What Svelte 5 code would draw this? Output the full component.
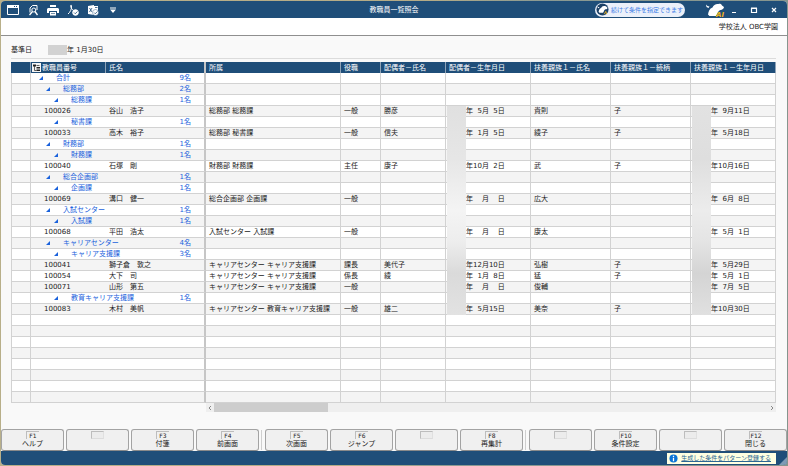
<script lang="ts">
  interface GroupRow {
    kind: 'group';
    level: number;
    label: string;
    count: number;
  }

  interface MemberRow {
    kind: 'member';
    id: string;
    name: string;
    dept: string;
    post: string;
    spouse: string;
    spouseBirth: string;
    dependent: string;
    relation: string;
    dependentBirth: string;
  }

  type Row = GroupRow | MemberRow;

  const FIG = '\u2007';

  // blank parts keep the width of two digits
  function date(month?: number, day?: number): string {
    const m = String(month ?? '').padStart(2, FIG);
    const d = String(day ?? '').padStart(2, FIG);
    return `年${m}月${d}日`;
  }

  function group(level: number, label: string, count: number): GroupRow {
    return { kind: 'group', level, label, count };
  }

  function member(
    id: string,
    name: string,
    dept: string,
    post: string,
    spouse: string,
    spouseBirth: string,
    dependent: string,
    relation: string,
    dependentBirth: string
  ): MemberRow {
    return { kind: 'member', id, name, dept, post, spouse, spouseBirth, dependent, relation, dependentBirth };
  }

  const rows: Row[] = [
    group(0, '合計', 9),
    group(1, '総務部', 2),
    group(2, '総務課', 1),
    member('100026', '谷山　浩子', '総務部 総務課', '一般', '勝彦', date(5, 5), '貴則', '子', date(9, 11)),
    group(2, '秘書課', 1),
    member('100033', '高木　裕子', '総務部 秘書課', '一般', '信夫', date(1, 5), '綾子', '子', date(5, 18)),
    group(1, '財務部', 1),
    group(2, '財務課', 1),
    member('100040', '石塚　剛', '財務部 財務課', '主任', '康子', date(10, 2), '武', '子', date(10, 16)),
    group(1, '総合企画部', 1),
    group(2, '企画課', 1),
    member('100069', '溝口　健一', '総合企画部 企画課', '一般', '', date(), '広大', '', date(6, 8)),
    group(1, '入試センター', 1),
    group(2, '入試課', 1),
    member('100068', '平田　浩太', '入試センター 入試課', '一般', '', date(), '康太', '', date(5, 1)),
    group(1, 'キャリアセンター', 4),
    group(2, 'キャリア支援課', 3),
    member('100041', '獅子倉　敦之', 'キャリアセンター キャリア支援課', '課長', '美代子', date(12, 10), '弘樹', '子', date(5, 29)),
    member('100054', '大下　司', 'キャリアセンター キャリア支援課', '係長', '綾', date(1, 8), '猛', '子', date(5, 1)),
    member('100071', '山形　第五', 'キャリアセンター キャリア支援課', '一般', '', date(), '俊輔', '', date(7, 5)),
    group(2, '教育キャリア支援課', 1),
    member('100083', '木村　美帆', 'キャリアセンター 教育キャリア支援課', '一般', '雄二', date(5, 15), '美奈', '子', date(10, 30))
  ];

  const firstMember = rows.findIndex((r) => r.kind === 'member');
  const blankRows = Array.from({ length: 8 });
  const trailing = Array.from({ length: 7 });

  const keyGroups = [
    [
      { key: 'F1', label: 'ヘルプ' },
      { key: '', label: '' },
      { key: 'F3', label: '付箋' },
      { key: 'F4', label: '前画面' }
    ],
    [
      { key: 'F5', label: '次画面' },
      { key: 'F6', label: 'ジャンプ' },
      { key: '', label: '' },
      { key: 'F8', label: '再集計' }
    ],
    [
      { key: '', label: '' },
      { key: 'F10', label: '条件設定' },
      { key: '', label: '' },
      { key: 'F12', label: '閉じる' }
    ]
  ];
</script>

{#snippet dog()}
  <path d="M1 2.500 2.500 4 4.500 4.500 3.500 6 1.500 5Z" />
  <path
    d="M3 12.500C3.500 9.500 4.500 6.500 7.500 5.500 8.500 3 11 1.500 13.500 2c1.500-.5 3 .2 3.500 1.500l2 1.500c-.3 1.800-1.500 2.800-3.500 3-1.500.5-2.500 1.500-3 3.500l-1.500 2.500H4.500Z"
  />
{/snippet}

<div class="desktop">
  <div class="window">
    <header class="titlebar">
      <div class="tools">
        <button type="button" aria-label="ウィンドウ">
          <svg viewBox="0 0 12 10" fill="none" stroke="currentColor">
            <path d="M.5.5h11v9H.5z" />
            <path d="M0 1.500h12" stroke-width="3" />
            <path d="M7 1.500h1M9 1.500h1" stroke="#1f4e79" />
          </svg>
        </button>
        <button type="button" aria-label="印刷プレビュー">
          <svg viewBox="0 0 12 12" fill="none" stroke="currentColor">
            <path d="M3 8.500V4l2.500-2.500H10V6" />
            <circle cx="6.800" cy="6" r="2" />
            <path d="M5.500 7.500 2.500 11M8 7.500 10.500 11" stroke-width="1.300" />
          </svg>
        </button>
        <button type="button" aria-label="印刷">
          <svg viewBox="0 0 12 12" fill="currentColor">
            <path d="M3 1h6v2H3zM1 4h10l1 1v4H10V7H2v2H0V5zM3 8h6v3.500H3z" />
            <path d="M4 9.500h4" stroke="#1f4e79" stroke-width=".6" />
          </svg>
        </button>
        <button type="button" aria-label="PDF出力">
          <svg viewBox="0 0 12 12" fill="none" stroke="currentColor">
            <path d="M1 10C3 8.500 5 5 4.500 1.500 4 .5 3 1.500 4 3.500 5 5.500 6 6.500 8 7" />
            <circle cx="8.500" cy="8.500" r="2.800" fill="currentColor" />
            <path d="m7 8.500 1.200 1.200L10.500 7.500" stroke="#1f4e79" stroke-width=".8" />
          </svg>
        </button>
        <button type="button" aria-label="Excel出力">
          <svg viewBox="0 0 12 12" fill="currentColor">
            <path d="M1 2l6-1v10L1 10zM7 2h4v5H7z" />
            <path d="M2.500 4l2.500 4M5 4 2.500 8M8 3.500h2.500" stroke="#1f4e79" stroke-width=".8" />
            <circle cx="8.500" cy="8.500" r="3" stroke="#1f4e79" stroke-width=".4" />
            <path d="m7 8.500 1.200 1.200L10.500 7.500" fill="none" stroke="#1f4e79" stroke-width=".8" />
          </svg>
        </button>
        <button type="button" aria-label="その他">
          <svg viewBox="0 0 12 12" fill="currentColor">
            <path d="M3 3.500h6v1H3zM3 5.500h6L6 9z" />
          </svg>
        </button>
      </div>

      <h1>教職員一覧照会</h1>

      <div class="right">
        <button type="button" class="hint">
          <svg viewBox="0 0 14 14">
            <circle cx="7" cy="7" r="6.500" fill="#1c4167" />
            <g fill="#fff" transform="translate(1 2) scale(.6)">{@render dog()}</g>
            <path d="M9 12l1.500-3 1 3" fill="none" stroke="#e8b023" />
          </svg>
          続けて条件を指定できます
        </button>
        <button type="button" class="ai" aria-label="AIアシスタント">
          <svg viewBox="0 0 20 15">
            <g fill="#fff">{@render dog()}</g>
            <text x="11" y="14.500">AI</text>
          </svg>
        </button>
        <div class="controls">
          <button type="button" aria-label="最小化">
            <svg viewBox="0 0 8 8"><path d="M2 6.500h4" /></svg>
          </button>
          <button type="button" aria-label="最大化">
            <svg viewBox="0 0 8 8"><path d="M1.500 2.500h5v4h-5zM1 2h6" /></svg>
          </button>
          <button type="button" aria-label="ウィンドウを閉じる">
            <svg viewBox="0 0 8 8"><path d="m2 2 4 4M6 2 2 6" /></svg>
          </button>
        </div>
      </div>
    </header>

    <div class="company">学校法人 OBC学園</div>

    <main>
      <div class="criteria">
        <span>基準日</span>
        <span class="base-date"><i></i>年 1月30日</span>
      </div>

      <table>
        <colgroup>
          <col class="w-mark" />
          <col class="w-id" />
          <col class="w-name" />
          <col />
          <col class="w-post" />
          <col class="w-spouse" />
          <col class="w-date" />
          <col class="w-dep" />
          <col class="w-dep" />
          <col class="w-date" />
        </colgroup>
        <thead>
          <tr>
            <th aria-label="付箋"></th>
            <th class="id-head">
              <div>
                <button type="button" aria-label="階層表示">
                  <svg viewBox="0 0 9 9">
                    <path d="M0 0h9v9H0z" fill="#f4f4f4" />
                    <path d="M1 1.500h3v2H1zM4.500 4H8v1.500H4.500zM4.500 6.500H8V8H4.500z" fill="#222" />
                    <path d="M2.500 3v4.500h2M4.500 2.500h3" fill="none" stroke="#222" stroke-width=".7" />
                  </svg>
                </button>
                教職員番号
              </div>
            </th>
            <th class="name-head">氏名</th>
            <th>所属</th>
            <th>役職</th>
            <th>配偶者－氏名</th>
            <th>配偶者－生年月日</th>
            <th>扶養親族１－氏名</th>
            <th>扶養親族１－続柄</th>
            <th>扶養親族１－生年月日</th>
          </tr>
        </thead>
        <tbody>
          {#each rows as row, i}
            <tr>
              <td></td>
              {#if row.kind === 'group'}
                <td colspan="2" class="group">
                  <div class="tree level-{row.level}">
                    <button type="button" aria-label="{row.label}を折りたたむ"></button>
                    <span>{row.label}</span>
                    <span class="count">{row.count}名</span>
                  </div>
                </td>
                {#each trailing as _}
                  <td></td>
                {/each}
              {:else}
                <td class="id">{row.id}</td>
                <td class="name">{row.name}</td>
                <td>{row.dept}</td>
                <td>{row.post}</td>
                <td>{row.spouse}</td>
                <td class="date">
                  {#if i === firstMember}<div class="mask"></div>{/if}
                  {row.spouseBirth}
                </td>
                <td>{row.dependent}</td>
                <td>{row.relation}</td>
                <td class="date">
                  {#if i === firstMember}<div class="mask mask--dark"></div>{/if}
                  {row.dependentBirth}
                </td>
              {/if}
            </tr>
          {/each}
          {#each blankRows as _}
            <tr>
              <td></td>
              <td colspan="2" class="group"></td>
              {#each trailing as _}
                <td></td>
              {/each}
            </tr>
          {/each}
        </tbody>
      </table>

      <div class="scroll">
        <button type="button" aria-label="左へスクロール">
          <svg viewBox="0 0 8 8"><path d="M5 2 3 4l2 2" /></svg>
        </button>
        <div class="thumb"></div>
        <button type="button" aria-label="右へスクロール">
          <svg viewBox="0 0 8 8"><path d="m3 2 2 2-2 2" /></svg>
        </button>
      </div>
    </main>

    <nav class="keys">
      {#each keyGroups as keys}
        <div class="key-group">
          {#each keys as k}
            <button type="button" disabled={!k.key} aria-label={k.label || '未割り当て'}>
              <kbd class:empty={!k.key}>{k.key}</kbd>
              <span>{k.label}</span>
            </button>
          {/each}
        </div>
      {/each}
    </nav>

    <footer>
      <div class="notice">
        <svg viewBox="0 0 10 10">
          <circle cx="5" cy="5" r="4.500" fill="#0a74d6" />
          <path d="M5 2v1.300M5 4.200V8" stroke="#fff" stroke-width="1.400" />
        </svg>
        <a href="#pattern">生成した条件をパターン登録する</a>
      </div>
      <svg class="grip" viewBox="0 0 8 8"><path d="M8 0v8H0z" /></svg>
    </footer>
  </div>
</div>

<style>
  :global(body) {
    margin: 0;
  }

  .desktop {
    --navy: #1f4e79;
    --line: #d2d2d2;
    box-sizing: border-box;
    display: flex;
    min-height: 100vh;
    padding: 1px;
    background: linear-gradient(100deg, #b9b08a 0%, #b4ab86 50%, #8b9a92 62%, #85948d 100%);
    font-family: 'DejaVu Sans', 'Noto Sans CJK JP', sans-serif;
    font-size: 7px;
    line-height: 10px;
    color: #222;
  }

  .window {
    display: flex;
    flex: 1;
    flex-direction: column;
    min-width: 0;
    overflow: hidden;
    border-radius: 4px;
    background: #f9f9f9;
  }

  button {
    padding: 0;
    border: none;
    background: transparent;
    color: inherit;
    font: inherit;
  }

  svg {
    display: block;
  }

  .titlebar {
    display: grid;
    grid-template-columns: 1fr auto 1fr;
    align-items: center;
    height: 17px;
    background: var(--navy);
    color: #fff;
  }

  h1 {
    margin: 0;
    font-size: 7px;
    font-weight: 400;
  }

  .tools {
    display: flex;
    align-items: center;
    gap: 8px;
    padding-left: 6px;
  }

  .tools svg {
    width: 12px;
    height: 12px;
  }

  .right {
    display: flex;
    align-items: center;
    justify-content: flex-end;
    padding-right: 9px;
  }

  .hint {
    display: flex;
    align-items: center;
    gap: 2px;
    box-sizing: border-box;
    height: 14px;
    padding: 0 2px 0 1px;
    border-radius: 7px;
    background: #ebf0fa;
    color: #3b7be6;
    font-size: 6px;
    white-space: nowrap;
  }

  .hint svg {
    width: 13px;
    height: 13px;
  }

  .ai {
    margin: 0 5px 0 20px;
  }

  .ai svg {
    width: 20px;
    height: 15px;
  }

  .ai text {
    fill: #f2b31c;
    font-size: 7px;
    font-style: italic;
    font-weight: 700;
  }

  .controls {
    display: flex;
    gap: 12px;
  }

  .controls svg {
    width: 8px;
    height: 8px;
    fill: none;
    stroke: #fff;
    stroke-width: 1.2;
  }

  .company {
    padding: 4px 9px 3px;
    border-bottom: 1px solid #8f8f8f;
    background: #fff;
    text-align: right;
  }

  main {
    flex: 1;
    padding: 0 11px 0 10px;
  }

  .criteria {
    display: flex;
    gap: 16px;
    margin-bottom: 3px;
    padding: 9px 0 3px;
    border-bottom: 1px solid #dcdcdc;
  }

  .base-date {
    display: flex;
    align-items: center;
  }

  .base-date i {
    width: 19px;
    height: 10px;
    background: #d2d2d2;
  }

  table {
    width: 100%;
    border-spacing: 0;
    table-layout: fixed;
  }

  .w-mark {
    width: 20px;
  }
  .w-id {
    width: 75px;
  }
  .w-name {
    width: 100px;
  }
  .w-post {
    width: 40px;
  }
  .w-spouse {
    width: 65px;
  }
  .w-date {
    width: 85px;
  }
  .w-dep {
    width: 80px;
  }

  th {
    height: 11px;
    padding: 0 0 0 3px;
    border-right: 1px solid #8fa3b8;
    background: var(--navy);
    color: #fff;
    font-weight: 400;
    text-align: left;
    white-space: nowrap;
  }

  .id-head {
    padding-left: 1px;
  }

  .id-head div {
    display: flex;
    align-items: center;
    gap: 1px;
  }

  .id-head svg {
    width: 9px;
    height: 9px;
  }

  td {
    height: 10px;
    padding: 0 0 0 3px;
    border-right: 1px solid var(--line);
    border-bottom: 1px solid var(--line);
    white-space: nowrap;
  }

  td:first-child {
    border-left: 1px solid var(--line);
  }

  tbody tr {
    background: #fff;
  }

  tbody tr:nth-child(even) {
    background: #f4f4f4;
  }

  .id {
    padding-left: 13px;
    border-right: none;
  }

  .group,
  .name,
  .name-head {
    border-right: 2px solid #c6c6c6;
  }

  .tree {
    display: flex;
    align-items: center;
    padding-right: 13px;
    color: #1a62dc;
  }

  .tree button {
    width: 4px;
    height: 4px;
    margin-right: 13px;
    background: #1a62dc;
    clip-path: polygon(100% 0, 100% 100%, 0 100%);
  }

  .level-0 {
    padding-left: 5px;
  }
  .level-1 {
    padding-left: 12px;
  }
  .level-2 {
    padding-left: 20px;
  }

  .count {
    margin-left: auto;
  }

  .date {
    position: relative;
    padding-left: 20px;
  }

  .mask {
    position: absolute;
    z-index: 1;
    top: 0;
    left: 1px;
    width: 19px;
    height: 209px;
    background: linear-gradient(#e0e0e0, #e6e6e6 25%, #f4f4f4 50%, #ededed 65%, #dadada 80%, #e2e2e2);
  }

  .mask--dark {
    background: linear-gradient(#e2e2e2, #dedede 25%, #ececec 50%, #e4e4e4 65%, #d4d4d4 80%, #e0e0e0);
  }

  .scroll {
    display: flex;
    align-items: center;
    height: 9px;
    margin-left: 195px;
    background: #efefef;
  }

  .scroll svg {
    width: 8px;
    height: 8px;
    fill: none;
    stroke: #888;
  }

  .thumb {
    width: 20%;
    height: 9px;
    margin-right: auto;
    background: #cdcdcd;
  }

  .keys {
    display: flex;
    gap: 6px;
  }

  .key-group {
    position: relative;
    display: flex;
    flex: 1;
    gap: 2px;
  }

  .key-group + .key-group::before {
    position: absolute;
    top: 1px;
    bottom: 1px;
    left: -4px;
    width: 1px;
    background: #cfcfcf;
    content: '';
  }

  .key-group button {
    display: flex;
    flex: 1;
    flex-direction: column;
    align-items: center;
    box-sizing: border-box;
    height: 22px;
    padding-top: 1px;
    border: 1px solid #a3a3a3;
    border-bottom-color: #8a8a8a;
    border-radius: 3px;
    background: #f0f0f0;
    color: #222;
  }

  kbd {
    box-sizing: border-box;
    min-width: 13px;
    height: 8px;
    border-top: 1px solid #bdbdbd;
    border-left: 1px solid #bdbdbd;
    font-family: inherit;
    font-size: 6px;
    line-height: 7px;
    text-align: center;
  }

  kbd.empty {
    border-right: 1px solid #e0e0e0;
    border-bottom: 1px solid #dcdcdc;
    background: #ececec;
  }

  footer {
    display: flex;
    align-items: center;
    justify-content: flex-end;
    height: 14px;
    background: var(--navy);
  }

  .notice {
    display: flex;
    align-items: center;
    gap: 3px;
    height: 11px;
    padding: 0 5px 0 2px;
    background: #ffffe1;
  }

  .notice svg {
    width: 9px;
    height: 9px;
  }

  .notice a {
    color: #2a6592;
    font-size: 6px;
  }

  .grip {
    align-self: flex-end;
    width: 8px;
    height: 8px;
    margin-left: 3px;
    fill: #7f9bb5;
  }
</style>
